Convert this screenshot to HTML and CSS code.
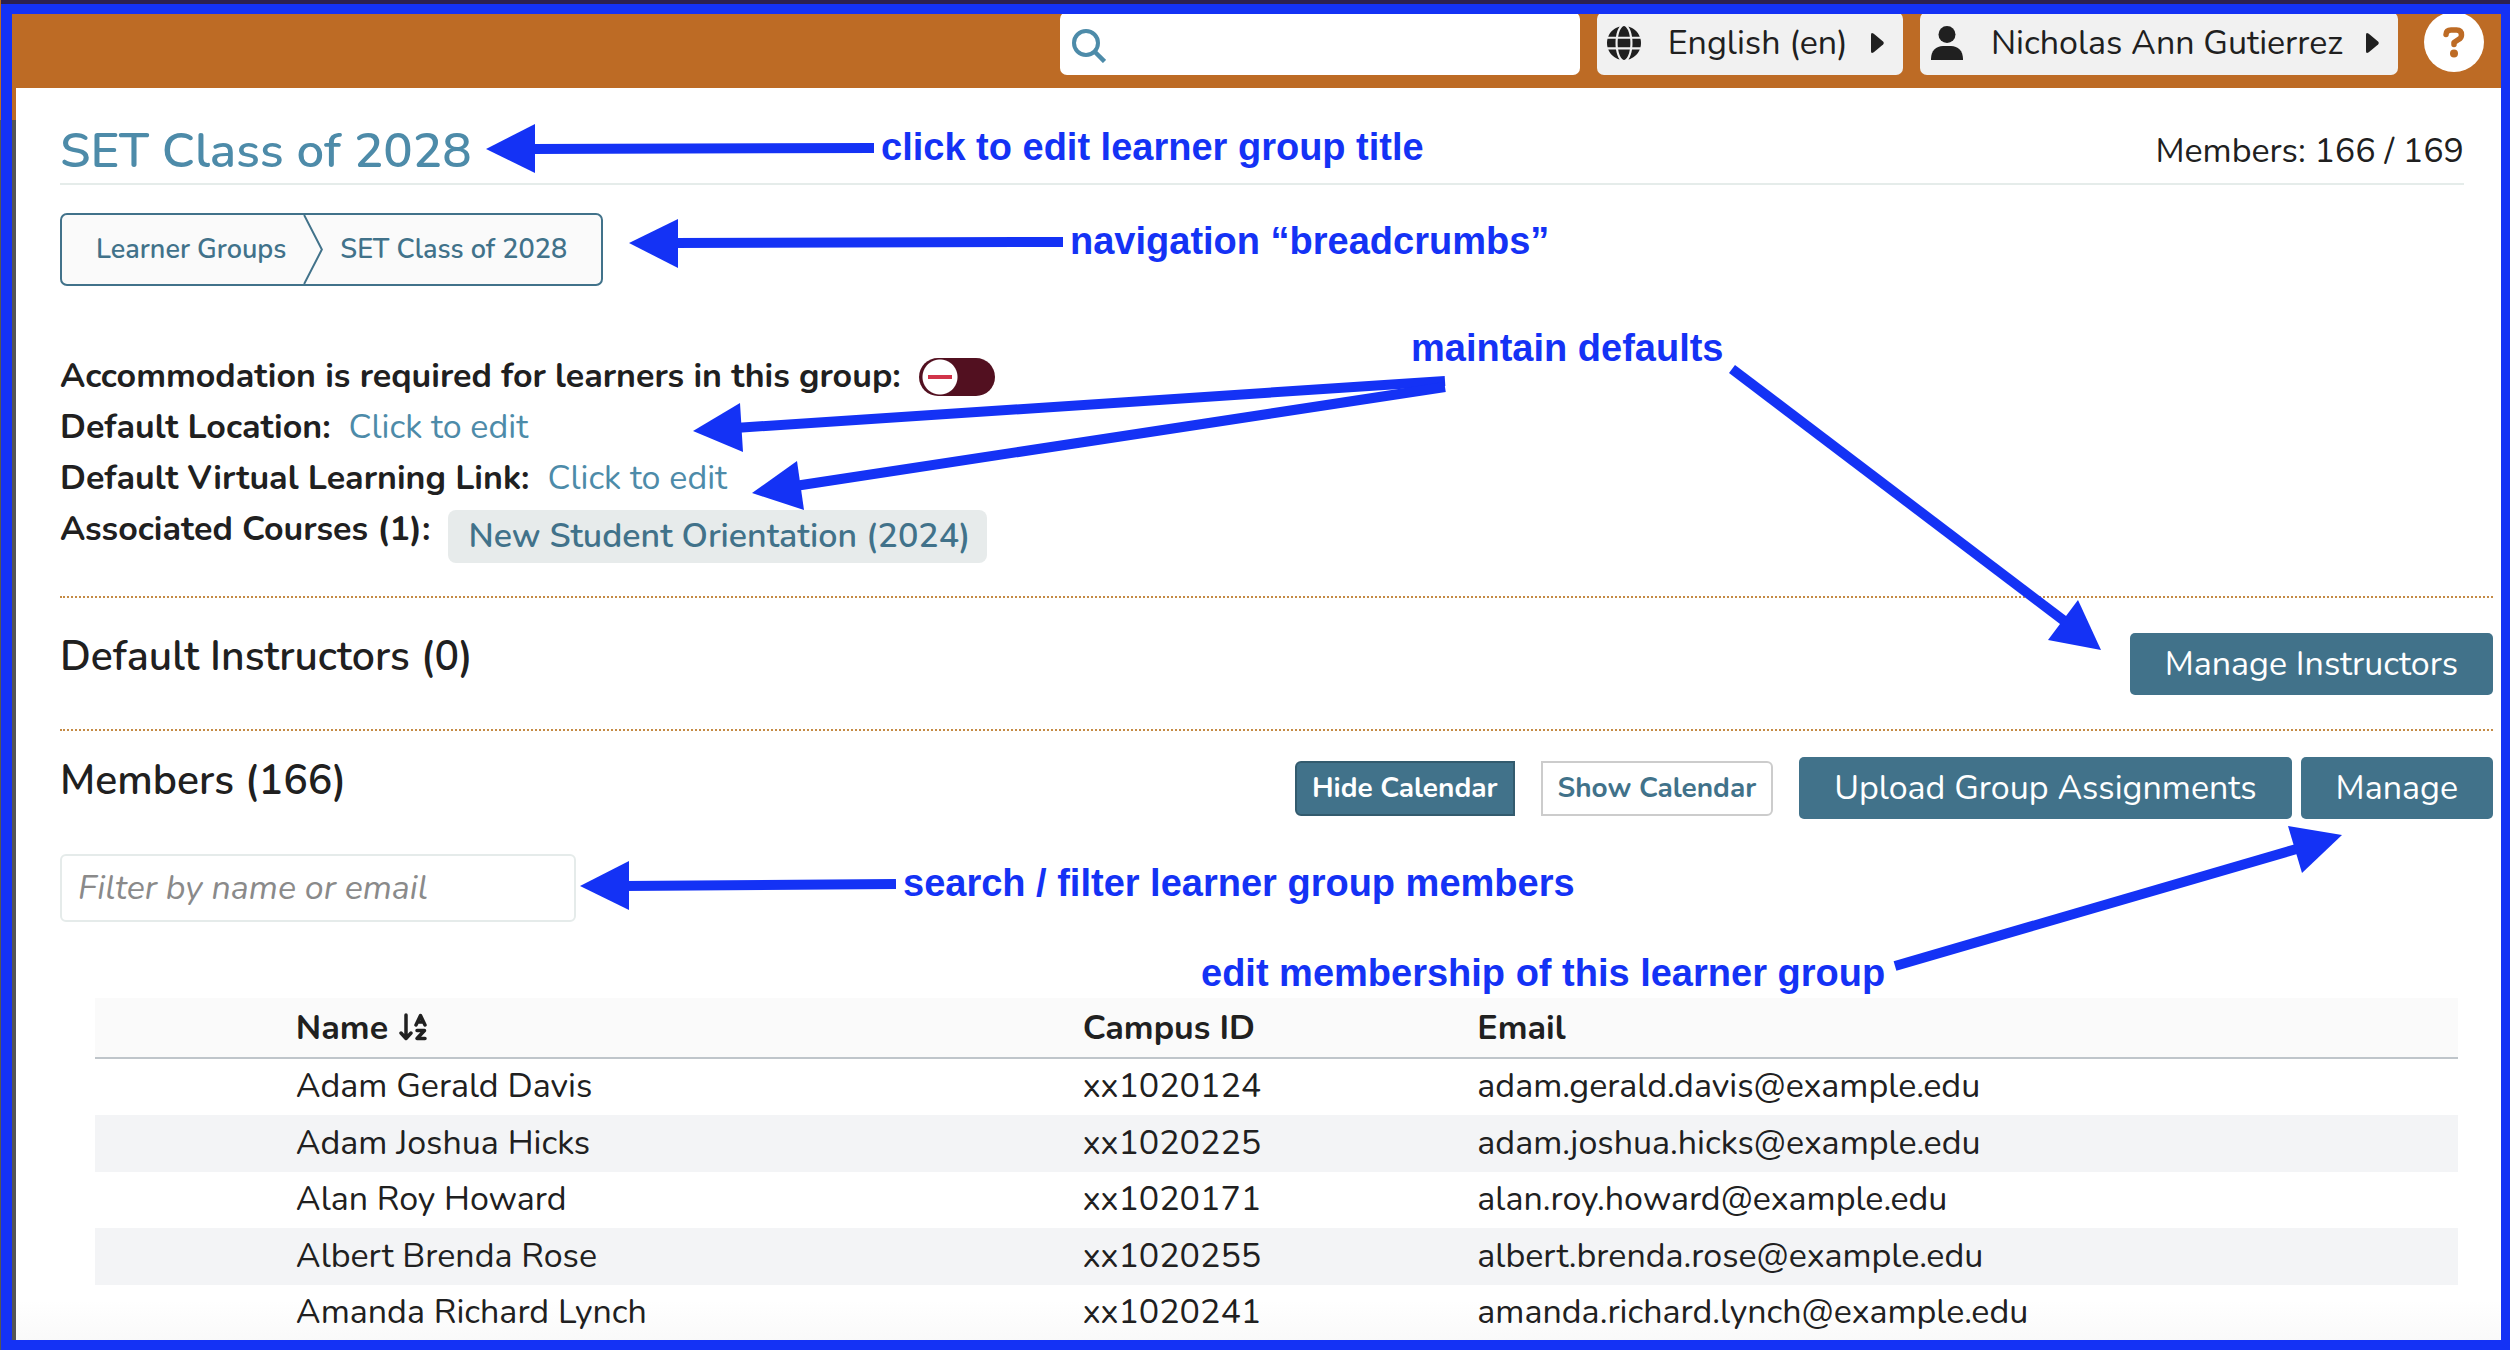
FILE: index.html
```html
<!DOCTYPE html>
<html lang="en">
<head>
<meta charset="utf-8">
<meta name="viewport" content="width=device-width, initial-scale=1">
<title>SET Class of 2028 - Learner Groups</title>
<link rel="stylesheet" href="styles.css">
</head>
<body>
<div class="page">
  <div class="rail"></div>
  <header class="topbar">
    <div class="search">
      <svg class="search-icon" viewBox="0 0 34 34" aria-hidden="true"><circle cx="14" cy="14" r="12" fill="none" stroke="#4d8ba9" stroke-width="4"/><path d="M23 23L32.500 32.500" stroke="#4d8ba9" stroke-width="4.500"/></svg>
      <input class="search-input" type="search" aria-label="Search">
    </div>
    <button class="menu-button" type="button">
      <svg class="menu-icon" viewBox="0 0 512 512" aria-hidden="true"><path fill="#202020" d="M352 256c0 22.200-1.200 43.600-3.300 64H163.300c-2.200-20.400-3.300-41.800-3.300-64s1.200-43.600 3.300-64h185.400c2.200 20.400 3.300 41.800 3.300 64zm28.800-64h123.100c5.300 20.500 8.100 41.900 8.100 64s-2.800 43.500-8.100 64H380.800c2.100-20.600 3.200-42 3.200-64s-1.100-43.400-3.200-64zm112.600-32H376.700c-10-63.900-29.800-117.400-55.300-151.600 78.300 20.700 142 77.500 172 151.600zm-149.100 0H167.700c6.100-36.400 15.500-68.600 27-94.700 10.500-23.600 22.200-40.700 33.500-51.500C239.400 3.200 248.700 0 256 0s16.600 3.200 27.800 13.800c11.300 10.800 23 27.900 33.500 51.500 11.600 26 20.900 58.200 27 94.700zm-209 0H18.600C48.600 85.900 112.200 29.100 190.600 8.400 165.100 42.600 145.300 96.100 135.300 160zM8.100 192h123.100c-2.100 20.600-3.200 42-3.200 64s1.100 43.400 3.200 64H8.100C2.800 299.500 0 278.100 0 256s2.800-43.500 8.100-64zm186.600 254.600c-11.600-26-20.900-58.200-27-94.600h176.600c-6.100 36.400-15.500 68.600-27 94.600-10.500 23.600-22.200 40.700-33.500 51.500C272.600 508.800 263.300 512 256 512s-16.600-3.200-27.800-13.800c-11.300-10.800-23-27.900-33.500-51.600zM135.300 352c10 63.900 29.800 117.400 55.300 151.600C112.200 482.900 48.600 426.100 18.600 352h116.700zm358.100 0c-30 74.100-93.600 130.900-171.900 151.600 25.500-34.200 45.200-87.700 55.300-151.600h116.600z"/></svg>
      <span>English (en)</span>
      <svg class="caret" viewBox="0 0 14 22" aria-hidden="true"><path fill="#202020" d="M0 2Q0-1 3 1L13 9.500Q14.500 11 13 12.500L3 21Q0 23 0 20Z"/></svg>
    </button>
    <button class="menu-button" type="button">
      <svg class="menu-icon" viewBox="0 0 34 34" aria-hidden="true"><circle cx="17" cy="8.500" r="8.500" fill="#202020"/><path fill="#202020" d="M1 34v-1C1 25 6 20 13 20h8c7 0 12 5 12 13v1Z"/></svg>
      <span>Nicholas Ann Gutierrez</span>
      <svg class="caret" viewBox="0 0 14 22" aria-hidden="true"><path fill="#202020" d="M0 2Q0-1 3 1L13 9.500Q14.500 11 13 12.500L3 21Q0 23 0 20Z"/></svg>
    </button>
    <button class="help" type="button" aria-label="Help">
      <svg class="help-icon" viewBox="0 0 22 32" aria-hidden="true"><path d="M3 8.500Q3 4 8 4H13.500Q18.500 4 18.500 9Q18.500 12 15.500 13.500L11 16.500V18.500" fill="none" stroke="#bd6b25" stroke-width="5.500" stroke-linecap="round" stroke-linejoin="round"/><circle cx="11" cy="27.500" r="4" fill="#bd6b25"/></svg>
    </button>
  </header>

  <main class="content">
    <div class="title-row">
      <h1 class="title"><button class="title-button" type="button">SET Class of 2028</button></h1>
      <span>Members: 166 / 169</span>
    </div>

    <nav class="breadcrumbs" aria-label="Breadcrumbs">
      <a class="crumb" href="#groups">Learner Groups</a>
      <svg class="crumb-arrow" viewBox="0 0 20 70" aria-hidden="true"><path d="M1 0L19 35L1 70" fill="none" stroke="#41728a" stroke-width="2"/></svg>
      <span class="crumb">SET Class of 2028</span>
    </nav>

    <div class="details">
      <div class="detail">
        <label class="detail-label" for="accommodation">Accommodation is required for learners in this group:</label>
        <input class="toggle" type="checkbox" role="switch" id="accommodation">
      </div>
      <div class="detail"><span class="detail-label">Default Location:</span><button class="edit" type="button">Click to edit</button></div>
      <div class="detail"><span class="detail-label">Default Virtual Learning Link:</span><button class="edit" type="button">Click to edit</button></div>
      <div class="detail"><span class="detail-label">Associated Courses (1):</span><a class="course" href="#course">New Student Orientation (2024)</a></div>
    </div>

    <section class="section instructors">
      <h2 class="heading">Default Instructors (0)</h2>
      <button class="button" type="button">Manage Instructors</button>
    </section>

    <section class="section members">
      <h2 class="heading">Members (166)</h2>
      <div class="actions">
        <div class="calendar-toggle">
          <button class="small-button selected" type="button">Hide Calendar</button>
          <button class="small-button" type="button">Show Calendar</button>
        </div>
        <div class="manage-buttons">
          <button class="button" type="button">Upload Group Assignments</button>
          <button class="button" type="button">Manage</button>
        </div>
      </div>
    </section>

    <input class="filter" type="text" aria-label="Filter members" placeholder="Filter by name or email">

    <table class="member-table">
      <colgroup><col class="col-select"><col class="col-name"><col class="col-id"><col></colgroup>
      <thead>
        <tr>
          <th></th>
          <th>Name <svg class="sort-icon" viewBox="0 0 28 28" aria-hidden="true"><g fill="none" stroke="#202020" stroke-width="3.500" stroke-linecap="round" stroke-linejoin="round"><path d="M7 2V25M2 20L7 25.500L12 20"/><path d="M17 12L21.500 2.500L26 12M19 9H24"/><path d="M18 17.500H25.500L18 25.500H26"/></g></svg></th>
          <th>Campus ID</th>
          <th>Email</th>
        </tr>
      </thead>
      <tbody>
        <tr><td></td><td>Adam Gerald Davis</td><td>xx1020124</td><td>adam.gerald.davis@example.edu</td></tr>
        <tr><td></td><td>Adam Joshua Hicks</td><td>xx1020225</td><td>adam.joshua.hicks@example.edu</td></tr>
        <tr><td></td><td>Alan Roy Howard</td><td>xx1020171</td><td>alan.roy.howard@example.edu</td></tr>
        <tr><td></td><td>Albert Brenda Rose</td><td>xx1020255</td><td>albert.brenda.rose@example.edu</td></tr>
        <tr><td></td><td>Amanda Richard Lynch</td><td>xx1020241</td><td>amanda.richard.lynch@example.edu</td></tr>
      </tbody>
    </table>
  </main>

  <div class="frame"></div>
  <svg class="arrows" width="2510" height="1350" viewBox="0 0 2510 1350" aria-hidden="true">
    <g stroke="#1432f5" stroke-width="10">
      <path d="M530 149L874 148"/><path d="M673 243L1063 242"/><path d="M735 428L1445 381"/><path d="M795 486L1445 387"/>
      <path d="M1732 369L2067 623"/><path d="M1895 966L2300 848"/><path d="M624 886L896 884"/>
    </g>
    <g fill="#1432f5">
      <path d="M486 149L535 124V173Z"/><path d="M629 243L678 219V268Z"/><path d="M693 431L740 403L743 452Z"/><path d="M752 493L797 461L804 510Z"/>
      <path d="M2101 650L2078 600L2048 640Z"/><path d="M2342 835L2288 826L2302 873Z"/><path d="M580 886L629 861V910Z"/>
    </g>
  </svg>
  <p class="note note-title">click to edit learner group title</p>
  <p class="note note-crumbs">navigation “breadcrumbs”</p>
  <p class="note note-defaults">maintain defaults</p>
  <p class="note note-search">search / filter learner group members</p>
  <p class="note note-manage">edit membership of this learner group</p>
</div>
</body>
</html>
```
FILE: styles.css
```css
* { box-sizing: border-box; }
body {
  margin: 0;
  color: #202020;
  background: #fff;
  font: 400 34px/42px Nunito, "Nunito Sans", Lato, sans-serif;
}
button, input { margin: 0; font: inherit; color: inherit; }
button { border: 0; padding: 0; background: none; white-space: nowrap; cursor: pointer; }
a { color: inherit; text-decoration: none; }

.page {
  position: relative;
  display: grid;
  grid-template-columns: 16px minmax(0, 1fr);
  grid-template-rows: auto 1fr;
  min-height: 100vh;
  overflow: hidden;
  background: linear-gradient(to top, #f8f8f8, #fff 50px);
}
.rail {
  grid-row: 1 / 3;
  background: linear-gradient(#bd6b25 120px, #555 120px);
}

/* Top bar */
.topbar {
  display: flex;
  justify-content: flex-end;
  gap: 17px;
  padding: 12px 26px 13px 0;
  background: #bd6b25;
}
.search {
  display: flex;
  align-items: center;
  gap: 10px;
  width: 520px;
  height: 63px;
  padding: 4px 12px 0;
  border-radius: 7px;
  background: #fff;
}
.search-icon { flex: none; width: 34px; height: 34px; }
.search-input { flex: 1; min-width: 0; border: 0; padding: 0; background: none; outline: 0; }
.menu-button {
  display: flex;
  align-items: center;
  gap: 23px;
  height: 63px;
  padding: 0 19px 2px 10px;
  border-radius: 7px;
  background: #f1f1f1;
}
.menu-icon { width: 34px; height: 34px; margin-right: 4px; }
.caret { width: 13px; height: 22px; }
.help {
  display: grid;
  place-items: center;
  width: 60px;
  height: 60px;
  margin-left: 9px;
  border-radius: 50%;
  background: #fff;
}
.help-icon { width: 22px; height: 32px; }

/* Group header */
.content { padding: 0 17px 0 44px; }
.title-row {
  display: flex;
  justify-content: space-between;
  align-items: center;
  margin-right: 29px;
  padding: 33px 0 2px;
  border-bottom: 2px solid #e5ecea;
}
.title { margin: 0; font-size: 49px; line-height: 60px; font-weight: 600; }
.title-button { color: #4d8ba9; }
.breadcrumbs {
  display: flex;
  width: fit-content;
  height: 73px;
  margin-top: 28px;
  padding: 0 34px;
  border: 2px solid #41728a;
  border-radius: 7px;
  background: #fafafa;
  color: #41728a;
  font-size: 27px;
  font-weight: 600;
  gap: 17px;
}
.crumb { align-self: center; }
.crumb-arrow { width: 20px; height: 69px; }

.details { margin-top: 65px; }
.detail { display: flex; align-items: center; gap: 18px; line-height: 51px; }
.detail-label { align-self: flex-start; font-weight: 700; }
.edit { color: #4d8ba9; }
.toggle {
  appearance: none;
  width: 76px;
  height: 38px;
  border-radius: 19px;
  background:
    linear-gradient(#d13449, #d13449) 9px 17px / 24px 4px no-repeat,
    radial-gradient(circle at 21px 19px, #fff 17px, #521020 18px);
}
.course {
  margin-top: 6px;
  padding: 0 16px 0 20px;
  border-radius: 8px;
  background: #e7ebeb;
  color: #41728a;
  font-weight: 600;
  line-height: 53px;
}

/* Sections */
.section {
  display: flex;
  justify-content: space-between;
  align-items: flex-start;
  border-top: 2px dotted #c58b45;
}
.instructors { margin-top: 33px; padding: 35px 0 34px; }
.members { padding-top: 26px; }
.heading { margin: 0; font-size: 41px; line-height: 48px; font-weight: 600; }
.actions, .calendar-toggle { display: flex; align-items: center; gap: 26px; }
.manage-buttons { display: flex; gap: 9px; }
.button {
  height: 62px;
  padding: 0 35px;
  border-radius: 5px;
  background: #41728a;
  color: #fff;
}
.small-button {
  height: 55px;
  padding: 0 15px;
  border: 2px solid #ccc;
  border-radius: 0 6px 6px 0;
  background: #fff;
  color: #41728a;
  font-size: 28px;
  font-weight: 700;
}
.small-button.selected {
  border-color: #335b6e;
  border-radius: 6px 0 0 6px;
  background: #41728a;
  color: #fff;
}
.filter {
  display: block;
  width: 516px;
  height: 68px;
  margin-top: 35px;
  padding: 0 16px;
  border: 2px solid #e5ebea;
  border-radius: 6px;
  background: #fff;
}
.filter::placeholder { color: #8a8a8a; font-style: italic; }

/* Member table */
.member-table {
  width: calc(100% - 70px);
  margin: 76px 35px 0;
  border-collapse: separate;
  border-spacing: 0;
  table-layout: fixed;
}
.col-select { width: 8.5%; }
.col-name { width: 33.3%; }
.col-id { width: 16.7%; }
th {
  height: 61px;
  padding: 0;
  border-bottom: 2px solid #bfc5ca;
  background: #fafafa;
  font-weight: 700;
  text-align: left;
}
td { height: 56px; padding: 0 0 2px; }
tbody tr:nth-child(even) { background: #f3f4f6; }
tbody tr:nth-child(even) td { height: 57px; }
.sort-icon { width: 28px; height: 28px; margin-left: 2px; vertical-align: -2px; }

/* Annotations laid over the page */
.frame {
  position: absolute;
  inset: 0 0 0 1px;
  border: solid #1432f5;
  border-width: 10px 9px 10px 11px;
  margin-top: 4px;
  box-shadow: 0 -4px #2c2150;
  pointer-events: none;
}
.arrows { position: absolute; top: 0; left: 0; pointer-events: none; }
.note {
  position: absolute;
  margin: 0;
  color: #1432f5;
  font: 700 38px/44px "Liberation Sans", Arial, sans-serif;
  white-space: nowrap;
}
.note-title { left: 881px; top: 125px; }
.note-crumbs { left: 1070px; top: 219px; }
.note-defaults { left: 1411px; top: 326px; }
.note-search { left: 903px; top: 861px; }
.note-manage { left: 1201px; top: 951px; }
```
